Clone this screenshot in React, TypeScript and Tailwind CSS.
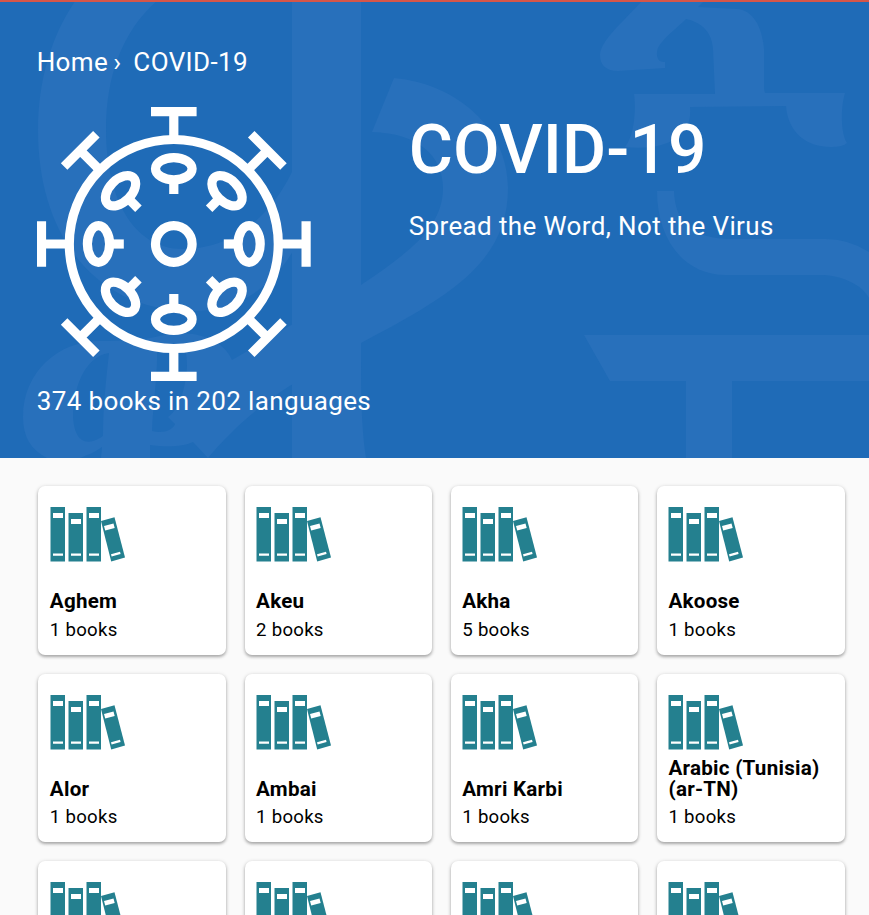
const languages = [
  { name: 'Aghem', count: 1 },
  { name: 'Akeu', count: 2 },
  { name: 'Akha', count: 5 },
  { name: 'Akoose', count: 1 },
  { name: 'Alor', count: 1 },
  { name: 'Ambai', count: 1 },
  { name: 'Amri Karbi', count: 1 },
  { name: 'Arabic (Tunisia) (ar-TN)', count: 1 },
  { name: '', count: 0 },
  { name: '', count: 0 },
  { name: '', count: 0 },
  { name: '', count: 0 },
];

function Backdrop() {
  return (
    <svg className="block" width="869" height="456" viewBox="0 2 869 456" fill="#2870bb" aria-hidden="true">
      {/* bowl and stem of the large letter */}
      <path d="M76 0C52 34 38 80 38 130C38 235 95 311 192 311C235 311 269 291 293 251V170C270 218 232 249 183 249C132 249 106 196 106 130C106 75 123 30 158 0Z" />
      <path d="M292 0H361V285C410 252 443 227 443 188C443 156 418 133 372 132L394 78C458 84 508 129 508 188C508 262 450 296 361 343C361 390 361 424 366 458H292Z" />
      {/* small ligature at the lower left */}
      <path
        fillRule="evenodd"
        d="M23 417C23 372 58 341 100 341C120 341 145 340 160 336C186 329 221 335 232 360C254 347 275 335 293 324V384C264 401 229 432 208 458L193 442C183 447 165 447 150 445V458H101L102 447C94 453 87 455 80 458H47C31 450 23 437 23 417ZM109 353C83 357 73 391 73 417C75 448 92 444 103 436C103 408 106 380 109 353ZM157 345C158 374 153 403 152 431C163 434 173 430 175 424L168 417C181 409 187 380 187 365C187 354 185 349 184 345Z"
      />
      <path d="M643 0L622 22C608 36 600 47 600 55C600 65 606 71 618 71L665 68V62C656 63 656 53 658 48C663 38 676 29 686 19C704 23 712 34 713 49L715 94H634C636 107 635 135 625 147C666 151 693 137 690 107L786 106C788 133 807 147 831 147Q843 147 847 143C840 132 841 106 845 93H765Q764 91 764 86V49C762 25 752 10 737 9L698 7L705 0Z" />
      <path d="M657 191H674C675 223 693 239 732 239H825Q849 239 869 252V298C861 283 839 275 820 275H726C682 275 657 237 657 191Z" />
      <path d="M584 335H869V381H732V458H686V381H610Z" />
    </svg>
  );
}

const turns = [0, 45, 90, 135, 180, 225, 270, 315];

function Virus() {
  return (
    <svg className="block size-[274px]" viewBox="-136.8 -137 274 274" fill="none" stroke="#fff" strokeWidth="9.2">
      <circle r="104.5" />
      <circle r="18.3" />
      {turns.map((a) => (
        <g key={a} transform={`rotate(${a})`}>
          <path d="M-22.8 -132.3H22.8M0 -132V-104" />
          <ellipse cy="-75.3" rx="18.3" ry="11.1" />
          <path d="M0 -64V-50" />
        </g>
      ))}
    </svg>
  );
}

function Books() {
  return (
    <svg className="block shrink-0" width="76" height="56" viewBox="0 0 76 56" aria-hidden="true">
      <g fill="#24808f">
        <path d="M.5 0H15V54.5H.5ZM18.5 6H33V54.5H18.5ZM36.5 0H51V54.5H36.5Z" />
        <path d="M51 14L64.5 10.3L75 50.5L61.2 54.5Z" />
      </g>
      <g fill="#fff">
        <path d="M3 6H13V11H3ZM21 12H31V17H21ZM39 6H49V11H39ZM54 19L63.5 16.4L64.7 21L55.2 23.5Z" />
        <path d="M3 46.5H13V48.8H3ZM21 46.5H31V48.8H21ZM39 46.5H49V48.8H39ZM61 47.3L70 44.8L70.6 46.9L61.6 49.4Z" />
      </g>
    </svg>
  );
}

export default function App() {
  return (
    <div className="flex h-[915px] w-[869px] flex-col overflow-hidden bg-[#fafafa] font-[Roboto,sans-serif]">
      <header className="relative h-[458px] shrink-0 border-t-2 border-[#d65649] bg-[#1f6bb7] text-[26px] tracking-[0.375px] text-white">
        <div className="absolute inset-x-0 top-0">
          <Backdrop />
        </div>
        <div className="relative px-[36.7px] pt-[44px]">
          <nav className="flex h-8 items-center leading-8">
            <a>Home</a>
            <span className="ml-[5px] mr-3">›</span>
            <a>COVID-19</a>
          </nav>
          <div className="mt-[29px] flex">
            <div className="w-[372px]">
              <Virus />
              <p className="mt-1 h-8 whitespace-nowrap leading-8">374 books in 202 languages</p>
            </div>
            <div className="whitespace-nowrap">
              <h1 className="mt-[3px] text-[67.7px] font-medium leading-[80px] tracking-[0.1px]">COVID-19</h1>
              <p className="mt-5 leading-8">Spread the Word, Not the Virus</p>
            </div>
          </div>
        </div>
      </header>
      <main className="grid auto-rows-[168.6px] grid-cols-4 gap-x-[18.6px] gap-y-[18.9px] pl-[38.35px] pr-[24.45px] pt-[28.2px] text-black">
        {languages.map((l, i) => (
          <div
            key={i}
            className="flex flex-col rounded-[7px] bg-white px-[11.5px] pb-[14.2px] pt-[21px] shadow-[0_1px_4px_rgba(0,0,0,0.2),0_2px_3px_rgba(0,0,0,0.22)]"
          >
            <Books />
            {l.name && (
              <>
                <h2 className="mt-auto text-[20.6px] font-bold leading-[21px] tracking-[0.25px]">{l.name}</h2>
                <p className="mt-[6.4px] text-[18.6px] leading-[22px] tracking-[0.28px]">{l.count} books</p>
              </>
            )}
          </div>
        ))}
      </main>
    </div>
  );
}
